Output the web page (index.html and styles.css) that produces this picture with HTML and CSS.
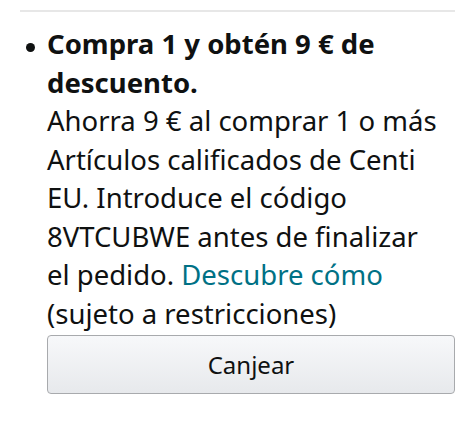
FILE: index.html
```html
<!DOCTYPE html>
<html lang="es">
<head>
    <meta charset="UTF-8">
    <meta name="viewport" content="width=device-width, initial-scale=1.0">
    <title>Promoción</title>

    <link rel="stylesheet" href="styles.css">
</head>
<body>
    <div id="promo-container">
        <hr class="divider">

        <ul class="promo-list">
            <li class="promo-item">
                <div class="promo-title">Compra 1 y obtén 9 € de descuento.</div>
                <div class="promo-text">
                    Ahorra 9 € al comprar 1 o más Artículos calificados de Centi EU. Introduce el código 8VTCUBWE antes de finalizar<br>
                    el pedido. <a class="promo-link" href="#">Descubre cómo</a>
                    (sujeto a restricciones)
                </div>
                <button class="redeem">Canjear</button>
            </li>
        </ul>
    </div>
</body>
</html>
```

FILE: styles.css
```css
body, html {
    padding: 0;
    margin: 0;
    background-color: white;
}

#promo-container {
    padding: 10px 20px 0 20px;
    font-family: "Noto Sans", "Open Sans", sans-serif;
    color: #0f1111;
}

.divider {
    margin: 0;
    border: none;
    border-top: 2px solid #e7e7e7;
}

.promo-list {
    margin: 0;
    padding: 0 0 0 27px;
    list-style: none;
}

.promo-item {
    position: relative;
    padding-top: 13px;
    font-size: 27.5px;
    line-height: 38.5px;
}

.promo-item::before {
    content: "";
    position: absolute;
    left: -21.5px;
    top: 30.5px;
    width: 9px;
    height: 9px;
    border-radius: 50%;
    background-color: #0f1111;
}

.promo-title {
    font-weight: bold;
}

.promo-link {
    color: #007185;
    text-decoration: none;
}

.redeem {
    display: block;
    width: 100%;
    height: 59px;
    margin-top: 2px;
    font-family: inherit;
    font-size: 24px;
    color: #0f1111;
    border: 1px solid #a8aaad;
    border-radius: 4px;
    background: linear-gradient(#f7f8fa, #e7e9ec);
}
```
